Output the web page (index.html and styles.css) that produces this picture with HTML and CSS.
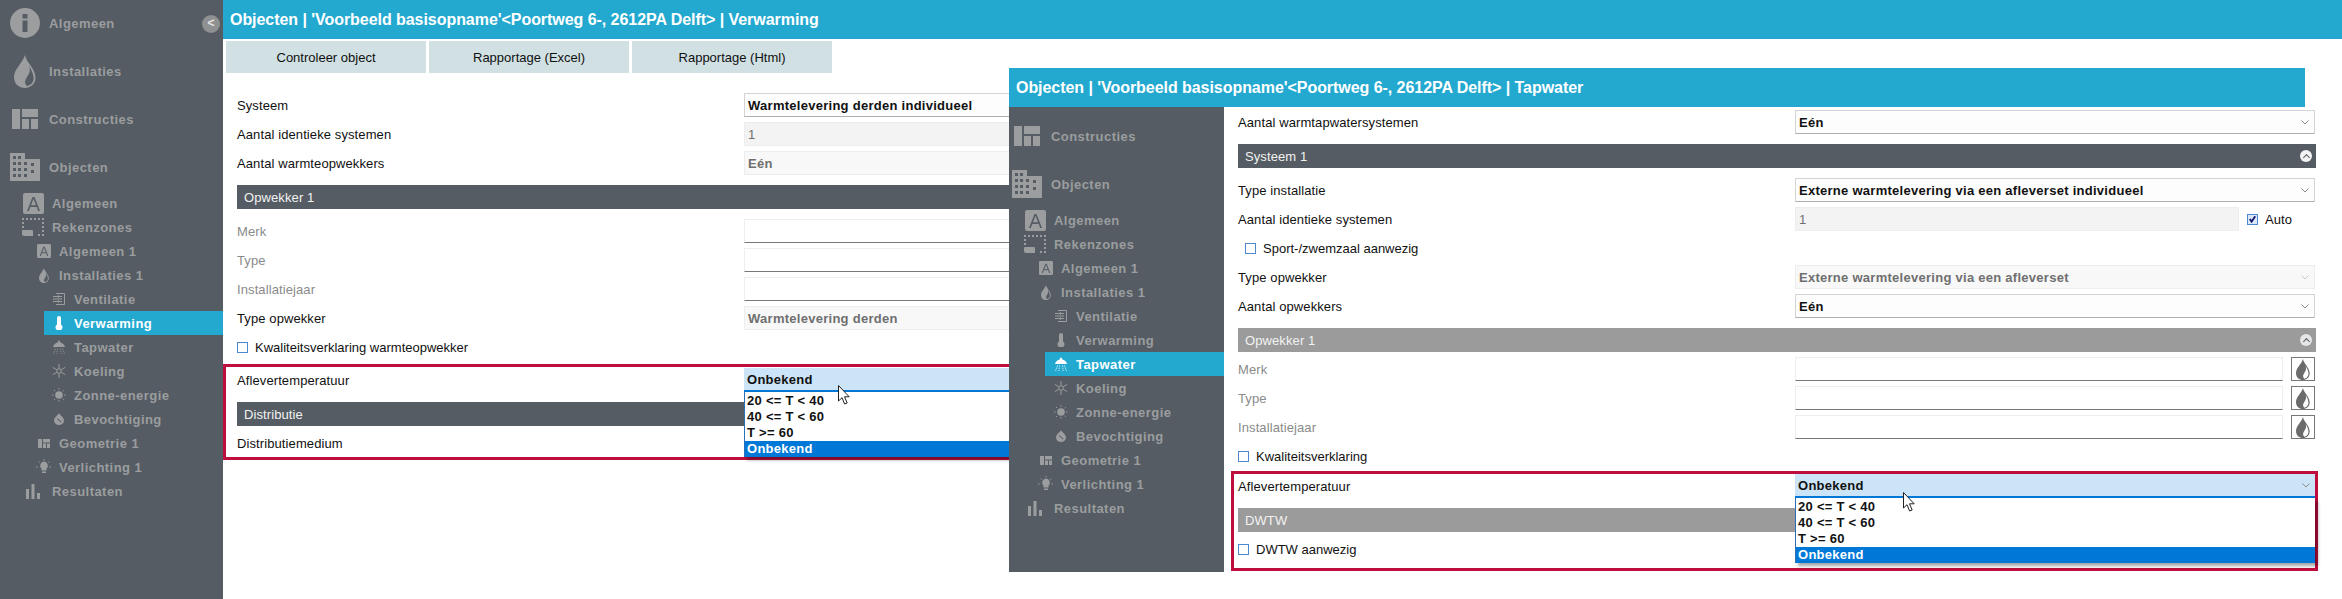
FILE: index.html
```html
<!DOCTYPE html>
<html lang="nl">
<head>
    <meta charset="UTF-8">
    <title>Objecten</title>
    <link rel="stylesheet" href="styles.css">
</head>
<body>
    <svg class="defs" aria-hidden="true">
        <symbol id="i-info" viewBox="0 0 30 30"><path fill-rule="evenodd" d="M15 0a15 15 0 1 0 0 30a15 15 0 0 0 0-30zM12.500 6h5v4.500h-5zM12.500 12.500h5V24h-5z"/></symbol>
        <symbol id="i-flame" viewBox="0 0 22 33"><path fill-rule="evenodd" d="M11 0C12 7 21 13 21.500 22C22 29 16 33 11 33C5 33 0 29 0 22C0 14 8 9 11 0zM15 11C17 16 15 19 13 22C11 25 10 28 13 31C18 30 20 26 19.500 22C19 18 17 14 15 11z"/></symbol>
        <symbol id="i-blocks" viewBox="0 0 26 20"><path d="M0 0h8v20H0zM10 0h16v8H10zM10 10h7v10h-7zM19 10h7v10h-7z"/></symbol>
        <symbol id="i-building" viewBox="0 0 30 28"><path fill-rule="evenodd" d="M0 0h15v6h15v22H0zM3 3v3h3V3zM8 3v3h3V3zM3 9v3h3V9zM8 9v3h3V9zM3 15v3h3v-3zM8 15v3h3v-3zM3 21v3h3v-3zM8 21v3h3v-3zM14 9v3h3V9zM14 15v3h3v-3zM14 21v3h3v-3zM21 10v3h3v-3zM21 17v3h3v-3z"/></symbol>
        <symbol id="i-a" viewBox="0 0 21 21"><path fill-rule="evenodd" d="M2 0h17a2 2 0 0 1 2 2v17a2 2 0 0 1-2 2H2a2 2 0 0 1-2-2V2a2 2 0 0 1 2-2zM9.500 4L4 18h1.800l1.500-4h6.400l1.500 4H17L11.500 4zM8 12.300l2.500-6.500l2.500 6.500z"/></symbol>
        <symbol id="i-zone" viewBox="0 0 22 18"><path d="M0 0h2v2H0zM4 0h2v2H4zM8 0h2v2H8zM12 0h2v2h-2zM16 0h2v2h-2zM20 0h2v2h-2zM20 4h2v2h-2zM20 8h2v2h-2zM20 12h2v2h-2zM20 16h2v2h-2zM16 16h2v2h-2zM0 4h2v2H0zM0 8h2v2H0zM1 12h9a1 1 0 0 1 1 1v5H2a2 2 0 0 1-2-2v-3a1 1 0 0 1 1-1z"/></symbol>
        <symbol id="i-vent" viewBox="0 0 14 14"><path fill="none" stroke="currentColor" d="M4 1.500h8.500v11H4M1 4.500h9M1 7h9M1 9.500h9M6 3c1 1 1 2 0 3M6 8c1 1 1 2 0 3"/></symbol>
        <symbol id="i-thermo" viewBox="0 0 8 14"><path d="M2 2a2 2 0 0 1 4 0v6.400a3.500 3.500 0 1 1-4 0z"/></symbol>
        <symbol id="i-shower" viewBox="0 0 14 14"><path d="M7 0l1.500 2.500C11 3 12.500 5 13 7H1C1.500 5 3 3 5.500 2.500z"/><path fill="none" stroke="currentColor" stroke-width=".8" stroke-dasharray="1.300 .9" d="M3.500 8.500L1.500 14M5.500 8.500L4.800 14M8.500 8.500L9.200 14M10.500 8.500L12.500 14"/></symbol>
        <symbol id="i-snow" viewBox="0 0 14 14"><path fill="none" stroke="currentColor" d="M7 0v4.500M7 9.500V14M.8 3.400l4 2.300M9.200 8.300l4 2.300M.8 10.600l4-2.300M9.200 5.700l4-2.300"/><circle cx="7" cy="7" r="2.300" fill="none" stroke="currentColor"/></symbol>
        <symbol id="i-sun" viewBox="0 0 14 14"><circle cx="7" cy="7" r="3.800"/><path fill="none" stroke="currentColor" stroke-dasharray="1.500 1" d="M7 0v2M7 12v2M0 7h2M12 7h2M2 2l1.300 1.300M10.700 10.700L12 12M2 12l1.300-1.300M10.700 3.300L12 2"/></symbol>
        <symbol id="i-drop" viewBox="0 0 10 12"><path fill-rule="evenodd" d="M5 0c.5 2 5 4 5 7.500a5 4.500 0 0 1-10 0C0 4 4.500 2 5 0zM3 6l4 3.500l.5-.7l-4-3.500z"/></symbol>
        <symbol id="i-geo" viewBox="0 0 12 9"><path d="M0 0h4v9H0zM5 0h7v3.500H5zM5 4.500h3V9H5zM9 4.500h3V9H9z"/></symbol>
        <symbol id="i-bulb" viewBox="0 0 16 16"><path d="M8 2.500a4 4 0 0 1 2.500 7v2h-5v-2A4 4 0 0 1 8 2.500zM6 12.500h4V14H6z"/><path fill="none" stroke="currentColor" stroke-dasharray="1.500 1" d="M0 8h2.500M13.500 8H16M8 0v1.500M2.500 2.500l1.200 1.200M12.300 3.700l1.200-1.200"/></symbol>
        <symbol id="i-bars" viewBox="0 0 14 15"><path d="M0 5h3v10H0zM5.500 0h3v15h-3zM11 9h3v6h-3z"/></symbol>
        <symbol id="i-chev" viewBox="0 0 8 5"><path fill="none" stroke="currentColor" d="M.5 .5L4 4l3.500-3.500"/></symbol>
        <symbol id="i-cursor" viewBox="0 0 12 20"><path fill="#fff" stroke="#222" d="M.5 .5v15.500l3.500-3.300l2.600 6.300l2.600-1l-2.700-6.200h4.700z"/></symbol>
    </svg>

    <div class="window window-back">
        <header class="title-bar title-back">Objecten | 'Voorbeeld basisopname'&lt;Poortweg 6-, 2612PA Delft&gt; | Verwarming</header>
        <aside class="sidebar sidebar-back">
            <span class="collapse">&lt;</span>
            <nav class="nav nav-back">
                <a class="nav-item lv0"><span class="ico"><svg width="30" height="30"><use href="#i-info"/></svg></span>Algemeen</a>
                <a class="nav-item lv0"><span class="ico"><svg width="22" height="33"><use href="#i-flame"/></svg></span>Installaties</a>
                <a class="nav-item lv0"><span class="ico"><svg width="26" height="20"><use href="#i-blocks"/></svg></span>Constructies</a>
                <a class="nav-item lv0"><span class="ico"><svg width="30" height="28"><use href="#i-building"/></svg></span>Objecten</a>
                <a class="nav-item lv1"><span class="ico"><svg width="21" height="21"><use href="#i-a"/></svg></span>Algemeen</a>
                <a class="nav-item lv1"><span class="ico"><svg width="22" height="18"><use href="#i-zone"/></svg></span>Rekenzones</a>
                <a class="nav-item lv2"><span class="ico"><svg width="14" height="14"><use href="#i-a"/></svg></span>Algemeen 1</a>
                <a class="nav-item lv2"><span class="ico"><svg width="10" height="15"><use href="#i-flame"/></svg></span>Installaties 1</a>
                <a class="nav-item lv3"><span class="ico"><svg width="14" height="14"><use href="#i-vent"/></svg></span>Ventilatie</a>
                <a class="nav-item lv3 active"><span class="ico"><svg width="8" height="14"><use href="#i-thermo"/></svg></span>Verwarming</a>
                <a class="nav-item lv3"><span class="ico"><svg width="14" height="14"><use href="#i-shower"/></svg></span>Tapwater</a>
                <a class="nav-item lv3"><span class="ico"><svg width="14" height="14"><use href="#i-snow"/></svg></span>Koeling</a>
                <a class="nav-item lv3"><span class="ico"><svg width="14" height="14"><use href="#i-sun"/></svg></span>Zonne-energie</a>
                <a class="nav-item lv3"><span class="ico"><svg width="10" height="12"><use href="#i-drop"/></svg></span>Bevochtiging</a>
                <a class="nav-item lv2"><span class="ico"><svg width="12" height="9"><use href="#i-geo"/></svg></span>Geometrie 1</a>
                <a class="nav-item lv2"><span class="ico"><svg width="16" height="16"><use href="#i-bulb"/></svg></span>Verlichting 1</a>
                <a class="nav-item lv1"><span class="ico"><svg width="14" height="15"><use href="#i-bars"/></svg></span>Resultaten</a>
            </nav>
        </aside>
        <main class="main main-back">
            <div class="tabs">
                <button class="tab">Controleer object</button>
                <button class="tab">Rapportage (Excel)</button>
                <button class="tab">Rapportage (Html)</button>
            </div>
            <div class="row"><label class="label">Systeem</label><div class="control select">Warmtelevering derden individueel</div></div>
            <div class="row"><label class="label">Aantal identieke systemen</label><div class="control input disabled">1</div></div>
            <div class="row"><label class="label">Aantal warmteopwekkers</label><div class="control select disabled">Eén</div></div>
            <div class="bar">Opwekker 1</div>
            <div class="row"><label class="label muted">Merk</label><div class="control input"></div></div>
            <div class="row"><label class="label muted">Type</label><div class="control input"></div></div>
            <div class="row"><label class="label muted">Installatiejaar</label><div class="control input"></div></div>
            <div class="row"><label class="label">Type opwekker</label><div class="control select disabled">Warmtelevering derden</div></div>
            <div class="row"><label class="check-label"><span class="check"></span>Kwaliteitsverklaring warmteopwekker</label></div>
            <div class="highlight">
                <div class="row"><label class="label">Aflevertemperatuur</label>
                    <div class="control select open">Onbekend
                        <ul class="dropdown">
                            <li>20 &lt;= T &lt; 40</li>
                            <li>40 &lt;= T &lt; 60</li>
                            <li>T &gt;= 60</li>
                            <li class="selected">Onbekend</li>
                        </ul>
                        <svg class="cursor" width="12" height="20"><use href="#i-cursor"/></svg>
                    </div>
                </div>
                <div class="bar">Distributie</div>
                <div class="row row-last"><label class="label">Distributiemedium</label></div>
            </div>
        </main>
    </div>

    <div class="window window-front">
        <header class="title-bar title-front">Objecten | 'Voorbeeld basisopname'&lt;Poortweg 6-, 2612PA Delft&gt; | Tapwater</header>
        <div class="front-body">
            <aside class="sidebar sidebar-front">
                <nav class="nav nav-front">
                    <a class="nav-item lv0"><span class="ico"><svg width="26" height="20"><use href="#i-blocks"/></svg></span>Constructies</a>
                    <a class="nav-item lv0"><span class="ico"><svg width="30" height="28"><use href="#i-building"/></svg></span>Objecten</a>
                    <a class="nav-item lv1"><span class="ico"><svg width="21" height="21"><use href="#i-a"/></svg></span>Algemeen</a>
                    <a class="nav-item lv1"><span class="ico"><svg width="22" height="18"><use href="#i-zone"/></svg></span>Rekenzones</a>
                    <a class="nav-item lv2"><span class="ico"><svg width="14" height="14"><use href="#i-a"/></svg></span>Algemeen 1</a>
                    <a class="nav-item lv2"><span class="ico"><svg width="10" height="15"><use href="#i-flame"/></svg></span>Installaties 1</a>
                    <a class="nav-item lv3"><span class="ico"><svg width="14" height="14"><use href="#i-vent"/></svg></span>Ventilatie</a>
                    <a class="nav-item lv3"><span class="ico"><svg width="8" height="14"><use href="#i-thermo"/></svg></span>Verwarming</a>
                    <a class="nav-item lv3 active"><span class="ico"><svg width="14" height="14"><use href="#i-shower"/></svg></span>Tapwater</a>
                    <a class="nav-item lv3"><span class="ico"><svg width="14" height="14"><use href="#i-snow"/></svg></span>Koeling</a>
                    <a class="nav-item lv3"><span class="ico"><svg width="14" height="14"><use href="#i-sun"/></svg></span>Zonne-energie</a>
                    <a class="nav-item lv3"><span class="ico"><svg width="10" height="12"><use href="#i-drop"/></svg></span>Bevochtiging</a>
                    <a class="nav-item lv2"><span class="ico"><svg width="12" height="9"><use href="#i-geo"/></svg></span>Geometrie 1</a>
                    <a class="nav-item lv2"><span class="ico"><svg width="16" height="16"><use href="#i-bulb"/></svg></span>Verlichting 1</a>
                    <a class="nav-item lv1"><span class="ico"><svg width="14" height="15"><use href="#i-bars"/></svg></span>Resultaten</a>
                </nav>
            </aside>
            <main class="main main-front">
                <div class="row"><label class="label">Aantal warmtapwatersystemen</label><div class="control select">Eén<svg class="chev" width="8" height="5"><use href="#i-chev"/></svg></div></div>
                <div class="bar">Systeem 1<span class="bar-toggle"></span></div>
                <div class="row"><label class="label">Type installatie</label><div class="control select">Externe warmtelevering via een afleverset individueel<svg class="chev" width="8" height="5"><use href="#i-chev"/></svg></div></div>
                <div class="row"><label class="label">Aantal identieke systemen</label>
                    <div class="control-group">
                        <div class="control input disabled">1</div>
                        <label class="auto"><span class="check checked"><svg width="10" height="10" viewBox="0 0 10 10"><path fill="none" stroke="#11116b" stroke-width="2" d="M2 5l2 3l4-6"/></svg></span>Auto</label>
                    </div>
                </div>
                <div class="row"><label class="check-label indent"><span class="check"></span>Sport-/zwemzaal aanwezig</label></div>
                <div class="row"><label class="label">Type opwekker</label><div class="control select disabled">Externe warmtelevering via een afleverset<svg class="chev" width="8" height="5"><use href="#i-chev"/></svg></div></div>
                <div class="row"><label class="label">Aantal opwekkers</label><div class="control select">Eén<svg class="chev" width="8" height="5"><use href="#i-chev"/></svg></div></div>
                <div class="bar bar-light bar-tight">Opwekker 1<span class="bar-toggle"></span></div>
                <div class="row"><label class="label muted">Merk</label><div class="control-group"><div class="control input"></div><button class="lib"><svg width="14" height="21"><use href="#i-flame"/></svg></button></div></div>
                <div class="row"><label class="label muted">Type</label><div class="control-group"><div class="control input"></div><button class="lib"><svg width="14" height="21"><use href="#i-flame"/></svg></button></div></div>
                <div class="row"><label class="label muted">Installatiejaar</label><div class="control-group"><div class="control input"></div><button class="lib"><svg width="14" height="21"><use href="#i-flame"/></svg></button></div></div>
                <div class="row row-kwal"><label class="check-label"><span class="check"></span>Kwaliteitsverklaring</label></div>
                <div class="highlight">
                    <div class="row"><label class="label">Aflevertemperatuur</label>
                        <div class="control select open">Onbekend<svg class="chev" width="8" height="5"><use href="#i-chev"/></svg>
                            <ul class="dropdown">
                                <li>20 &lt;= T &lt; 40</li>
                                <li>40 &lt;= T &lt; 60</li>
                                <li>T &gt;= 60</li>
                                <li class="selected">Onbekend</li>
                            </ul>
                            <svg class="cursor" width="12" height="20"><use href="#i-cursor"/></svg>
                        </div>
                    </div>
                    <div class="bar bar-light">DWTW</div>
                    <div class="row row-last"><label class="check-label"><span class="check"></span>DWTW aanwezig</label></div>
                </div>
            </main>
        </div>
    </div>
</body>
</html>
```

FILE: styles.css
```css
* {
    box-sizing: border-box;
}
html, body {
    margin: 0;
    height: 100%;
    overflow: hidden;
}
body {
    position: relative;
    background: #fff;
    color: #111;
    font-family: "Liberation Sans", Arial, sans-serif;
    font-size: 13px;
    letter-spacing: 0.1px;
}
.defs {
    position: absolute;
    width: 0;
    height: 0;
}

/* Windows */
.window-back {
    display: grid;
    grid-template-columns: 223px 1fr;
    grid-template-rows: 39px 1fr;
    height: 599px;
}
.window-front {
    position: absolute;
    z-index: 5;
    left: 1009px;
    top: 68px;
    width: 1309px;
}
.title-bar {
    display: flex;
    align-items: center;
    height: 39px;
    padding-left: 7px;
    background: #23a9d0;
    color: #fff;
    font-size: 16px;
    font-weight: bold;
    letter-spacing: -0.05px;
}
.title-back {
    grid-column: 2;
    grid-row: 1;
}
.title-front {
    width: 1296px;
}
.front-body {
    display: flex;
    height: 465px;
}

/* Sidebar */
.sidebar {
    position: relative;
    background: #555c63;
    color: #9b9d9f;
}
.sidebar-back {
    grid-column: 1;
    grid-row: 1 / 3;
}
.sidebar-front {
    flex: 0 0 215px;
}
.collapse {
    position: absolute;
    top: 15px;
    left: 202px;
    width: 18px;
    height: 18px;
    border-radius: 50%;
    background: #8f9092;
    color: #e4e4e4;
    font-size: 12px;
    font-weight: bold;
    line-height: 17px;
    text-align: center;
}
.nav-back {
    margin-top: -1px;
    padding-left: 7px;
}
.nav-front {
    padding-top: 5px;
}
.nav-item {
    display: flex;
    align-items: center;
    height: 24px;
    font-weight: bold;
    letter-spacing: 0.45px;
    white-space: nowrap;
}
.ico {
    display: flex;
    flex: none;
    justify-content: center;
    align-items: center;
}
.ico svg {
    fill: currentColor;
}
.lv0 {
    height: 48px;
    margin-left: -7px;
}
.lv0 .ico {
    width: 49px;
}
.lv1 .ico {
    width: 38px;
    margin-left: 7px;
}
.lv2 .ico {
    width: 30px;
    margin-left: 22px;
}
.lv3 {
    margin-left: 37px;
}
.lv3 .ico {
    width: 30px;
}
.nav-front .lv3 {
    margin-left: 36px;
}
.nav-front .lv3 .ico {
    width: 31px;
}
.active {
    background: #23a9d0;
    color: #fff;
}

/* Content */
.main {
    background: #fff;
}
.main-back {
    grid-column: 2;
    grid-row: 2;
    padding: 2px 1000px 0 14px;
}
.main-back .label {
    flex-basis: 507px;
}
.main-front {
    flex: 0 0 1094px;
    padding: 3px 2px 0 14px;
}
.main-front .label {
    flex-basis: 557px;
}
.main-front > .row {
    margin-right: 1px;
}
.tabs {
    display: flex;
    gap: 3px;
    margin: 0 0 20px -11px;
}
.tab {
    flex: 0 0 200px;
    height: 32px;
    padding: 0;
    border: 0;
    background: #d0e0e3;
    color: #111;
    font: inherit;
}
.row {
    display: flex;
    align-items: center;
    height: 24px;
    margin-bottom: 5px;
}
.row-last {
    margin-bottom: 0;
}
.label {
    flex: 0 0 auto;
}
.muted {
    color: #8a8a8a;
}
.bar {
    display: flex;
    align-items: center;
    justify-content: space-between;
    height: 24px;
    margin: 10px 0;
    padding: 0 7px;
    background: #555c63;
    color: #f2f2f2;
}
.bar-light {
    background: #9b9b9b;
}
.bar-tight {
    margin-bottom: 5px;
}
.bar-toggle {
    position: relative;
    width: 12px;
    height: 12px;
    margin-right: -3px;
    border-radius: 50%;
    background: #f4f4f4;
}
.bar-toggle::before {
    content: "";
    position: absolute;
    left: 4px;
    top: 5px;
    width: 4px;
    height: 4px;
    border-left: 1.500px solid #555c63;
    border-top: 1.500px solid #555c63;
    transform: rotate(45deg);
}
.bar-light .bar-toggle {
    background: #e6e6e6;
}
.control {
    position: relative;
    flex: 1;
    display: flex;
    align-items: center;
    height: 24px;
    padding-left: 3px;
    border: 1px solid #e4e4e4;
    background: #fff;
}
.select {
    border-color: #d4d4d4;
    border-bottom-color: #b0b0b0;
    background: #fdfdfd;
    font-weight: bold;
    letter-spacing: 0.27px;
}
.input {
    border-color: #eee;
    border-bottom-color: #777;
}
.input.disabled {
    font-weight: normal;
}
.disabled {
    border-color: #ededed;
    background: #f3f3f3;
    color: #6f6f6f;
}
.select.disabled {
    background: #f8f8f8;
}
.chev {
    position: absolute;
    right: 5px;
    top: 9px;
    color: #8a8a8a;
}
.disabled .chev {
    color: #c8c8c8;
}
.control-group {
    flex: 1;
    display: flex;
    align-items: center;
    gap: 8px;
}
.lib {
    display: flex;
    flex: 0 0 24px;
    align-items: center;
    justify-content: center;
    height: 24px;
    padding: 0;
    border: 1px solid #777;
    background: #fff;
}
.lib svg {
    fill: #6b6b6b;
}
.auto {
    display: flex;
    flex: 0 0 68px;
    align-items: center;
    gap: 7px;
}
.check-label {
    display: flex;
    align-items: center;
    gap: 7px;
    letter-spacing: 0;
}
.indent {
    margin-left: 7px;
}
.check {
    display: flex;
    align-items: center;
    justify-content: center;
    width: 11px;
    height: 11px;
    border: 1px solid #4f86d0;
    background: #fff;
}
.checked {
    background: #dbe8f8;
}

/* Highlighted area with the open list */
.highlight {
    height: 96px;
    margin: 1px 0 0 -14px;
    padding: 1px 0 0 11px;
    border: 3px solid #bf0d3e;
}
.highlight .bar {
    margin-bottom: 5px;
}
.main-front .highlight {
    height: 100px;
    margin: 0 -2px 0 -7px;
    padding: 0 0 0 4px;
}
.row-kwal {
    margin-bottom: 3px;
}
.open {
    border: 0;
    border-bottom: 2px solid #0078d7;
    background: #cce4f7;
}
.dropdown {
    position: absolute;
    z-index: 2;
    top: 24px;
    left: 0;
    right: 0;
    margin: 0;
    padding: 1px 0 0;
    list-style: none;
    border-left: 1px solid #2a6fb8;
    background: #fff;
    box-shadow: 3px 3px 3px rgba(0, 0, 0, 0.35);
}
.dropdown li {
    height: 16px;
    padding-left: 2px;
    color: #111;
    line-height: 16px;
}
.dropdown .selected {
    background: #0078d7;
    color: #fff;
}
.cursor {
    position: absolute;
    z-index: 3;
    left: 94px;
    top: 17px;
}
.main-front .cursor {
    left: 108px;
    top: 18px;
}
```
